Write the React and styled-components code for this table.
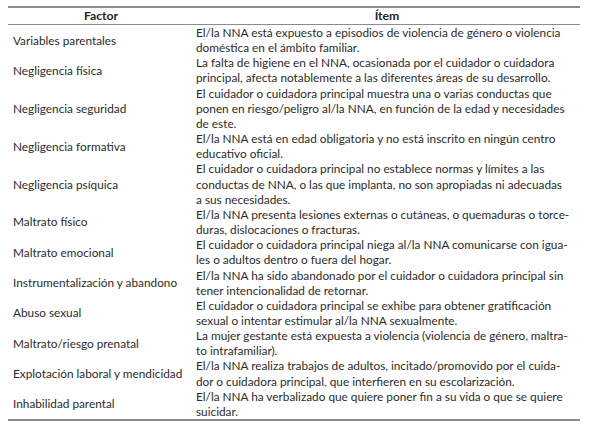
import styled, { createGlobalStyle } from "styled-components";

const GlobalStyle = createGlobalStyle`
  body {
    margin: 0;
    background: #ffffff;
  }
`;

const Page = styled.div`
  padding: 6px 9px 0 8px;
  font-family: Lato, "Open Sans", sans-serif;
  color: #2b2b2b;
`;

const Table = styled.table`
  width: 572px;
  border-collapse: collapse;
  border-top: 2px solid #8c8c8c;
  border-bottom: 2px solid #8c8c8c;
  font-size: 11.8px;
  line-height: 15.15px;
`;

const HeadCell = styled.th`
  height: 16px;
  padding: 0;
  font-weight: 700;
  font-size: 12.2px;
  text-align: center;
  border-bottom: 1px solid #8c8c8c;
  color: #222;
  width: ${(p) => p.$width || "auto"};
`;

const FactorCell = styled.td`
  padding: 0 0 0 5px;
  vertical-align: middle;
  white-space: nowrap;
`;

const ItemCell = styled.td`
  padding: 0 0 0 2px;
  vertical-align: top;
`;

const Line = styled.span`
  display: block;
  white-space: nowrap;
`;

const rows = [
  {
    factor: "Variables parentales",
    item: [
      "El/la NNA está expuesto a episodios de violencia de género o violencia",
      "doméstica en el ámbito familiar.",
    ],
  },
  {
    factor: "Negligencia física",
    item: [
      "La falta de higiene en el NNA, ocasionada por el cuidador o cuidadora",
      "principal, afecta notablemente a las diferentes áreas de su desarrollo.",
    ],
  },
  {
    factor: "Negligencia seguridad",
    item: [
      "El cuidador o cuidadora principal muestra una o varias conductas que",
      "ponen en riesgo/peligro al/la NNA, en función de la edad y necesidades",
      "de este.",
    ],
  },
  {
    factor: "Negligencia formativa",
    item: [
      "El/la NNA está en edad obligatoria y no está inscrito en ningún centro",
      "educativo oficial.",
    ],
  },
  {
    factor: "Negligencia psíquica",
    item: [
      "El cuidador o cuidadora principal no establece normas y límites a las",
      "conductas de NNA, o las que implanta, no son apropiadas ni adecuadas",
      "a sus necesidades.",
    ],
  },
  {
    factor: "Maltrato físico",
    item: [
      "El/la NNA presenta lesiones externas o cutáneas, o quemaduras o torce-",
      "duras, dislocaciones o fracturas.",
    ],
  },
  {
    factor: "Maltrato emocional",
    item: [
      "El cuidador o cuidadora principal niega al/la NNA comunicarse con igua-",
      "les o adultos dentro o fuera del hogar.",
    ],
  },
  {
    factor: "Instrumentalización y abandono",
    item: [
      "El/la NNA ha sido abandonado por el cuidador o cuidadora principal sin",
      "tener intencionalidad de retornar.",
    ],
  },
  {
    factor: "Abuso sexual",
    item: [
      "El cuidador o cuidadora principal se exhibe para obtener gratificación",
      "sexual o intentar estimular al/la NNA sexualmente.",
    ],
  },
  {
    factor: "Maltrato/riesgo prenatal",
    item: [
      "La mujer gestante está expuesta a violencia (violencia de género, maltra-",
      "to intrafamiliar).",
    ],
  },
  {
    factor: "Explotación laboral y mendicidad",
    item: [
      "El/la NNA realiza trabajos de adultos, incitado/promovido por el cuida-",
      "dor o cuidadora principal, que interfieren en su escolarización.",
    ],
  },
  {
    factor: "Inhabilidad parental",
    item: [
      "El/la NNA ha verbalizado que quiere poner fin a su vida o que se quiere",
      "suicidar.",
    ],
  },
];

const App = () => {
  return (
    <Page>
      <GlobalStyle />
      <Table>
        <thead>
          <tr>
            <HeadCell $width="186px">Factor</HeadCell>
            <HeadCell>Ítem</HeadCell>
          </tr>
        </thead>
        <tbody>
          {rows.map((row) => (
            <tr key={row.factor}>
              <FactorCell>{row.factor}</FactorCell>
              <ItemCell>
                {row.item.map((line) => (
                  <Line key={line}>{line}</Line>
                ))}
              </ItemCell>
            </tr>
          ))}
        </tbody>
      </Table>
    </Page>
  );
};

export default App;
